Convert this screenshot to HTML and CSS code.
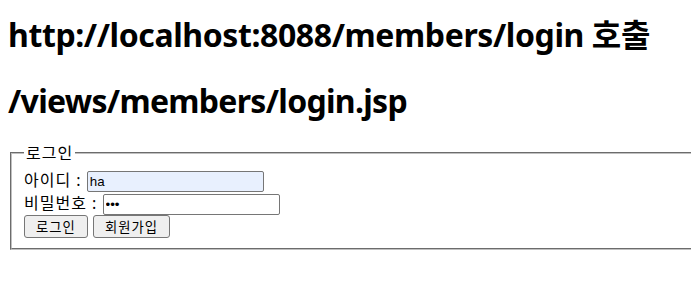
FILE: index.html
```html
<!DOCTYPE html>
<html lang="ko">
<head>
  <meta charset="UTF-8" />
  <meta name="viewport" content="width=device-width, initial-scale=1.0" />
  <title>로그인</title>
  <link rel="stylesheet" href="styles.css">
</head>
<body>
  <h1>http://localhost:8088/members/login 호출</h1>
  <h1 class="view-path">/views/members/login.jsp</h1>

  <form action="/members/login" method="post">
    <fieldset class="login-box">
      <legend>로그인</legend>
      아이디 : <input type="text" name="id" class="field autofill" value="ha" /><br>
      비밀번호 : <input type="password" name="pw" class="field" value="abc" /><br>
      <input type="submit" class="btn" value="로그인" />
      <input type="button" class="btn" value="회원가입" />
    </fieldset>
  </form>
</body>
</html>
```

FILE: styles.css
```css
html {
  overflow: hidden;
}
body {
  font-family: "Noto Sans", "Noto Sans CJK KR", sans-serif;
  font-size: 16px;
  line-height: 1.33;
  color: #000;
  background: #fff;
  margin: 0;
  padding: 8px;
}
h1 {
  font-size: 32px;
  font-weight: bold;
  line-height: 42px;
  letter-spacing: -0.4px;
  margin: 6px 0 20px;
}
h1 + h1 {
  margin-top: 24px;
}
.view-path {
  letter-spacing: -0.7px;
}
.login-box {
  box-sizing: border-box;
  width: 683px;
  margin: 0 2px;
  padding: 5px 12px 10px;
  border: 2px groove #c0c0c0;
  line-height: 22px;
  letter-spacing: 1px;
}
.login-box legend {
  padding: 0 2px;
}
.field {
  font-family: "Liberation Sans", "Noto Sans CJK KR", sans-serif;
  font-size: 13.33px;
  letter-spacing: 0;
  width: 177px;
  height: 21px;
  box-sizing: border-box;
  padding: 1px 2px;
  border: 1px solid #767676;
  border-radius: 2px;
  vertical-align: middle;
  margin: 0;
}
.autofill {
  background-color: #e8f0fe;
}
.btn {
  font-family: "Noto Sans CJK KR", sans-serif;
  font-size: 13.33px;
  letter-spacing: 1px;
  box-sizing: border-box;
  height: 23px;
  padding: 0 11px;
  background: #efefef;
  border: 1px solid #767676;
  border-radius: 3px;
  color: #000;
  margin: 0;
}
```
